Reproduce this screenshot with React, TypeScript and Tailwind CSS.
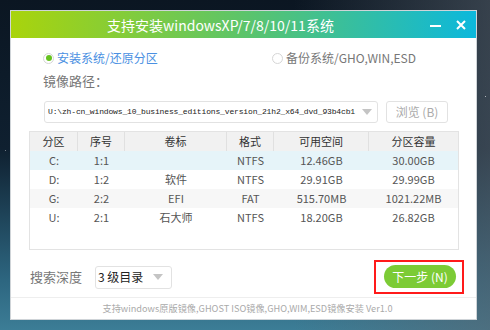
const rows = [
  { part: "C:", seq: "1:1", label: "", fmt: "NTFS", free: "12.46GB", size: "30.00GB", bg: "bg-[#e6f4f9]" },
  { part: "D:", seq: "1:2", label: "软件", fmt: "NTFS", free: "29.91GB", size: "29.99GB", bg: "bg-white" },
  { part: "G:", seq: "2:2", label: "EFI", fmt: "FAT", free: "515.70MB", size: "1021.22MB", bg: "bg-[#f7f7f7]" },
  { part: "U:", seq: "2:1", label: "石大师", fmt: "NTFS", free: "18.20GB", size: "26.82GB", bg: "bg-white" },
];

const cols = "grid grid-cols-[48px_47px_102px_47px_95px_89px]";

function Radio({ checked, label, active }: { checked?: boolean; label: string; active?: boolean }) {
  return (
    <div className="flex items-center gap-[3px]">
      <span className="flex h-[11px] w-[11px] items-center justify-center rounded-full border border-[#d6d6d6] bg-white">
        {checked && <span className="h-[6px] w-[6px] rounded-full bg-[#66c21f]" />}
      </span>
      <span className={active ? "text-[12px] text-[#4a90e2]" : "text-[12px] text-[#777]"}>{label}</span>
    </div>
  );
}

export default function App() {
  return (
    <div
      className="relative h-[330px] w-[490px] overflow-hidden bg-[linear-gradient(180deg,#0b1622_0%,#0f2030_45%,#2d6680_85%,#3c7d96_100%)] pt-[10px] pl-[10px]"
      style={{ fontFamily: '"Noto Sans CJK SC", "Noto Sans", sans-serif' }}
    >
      <div className="pointer-events-none absolute inset-0 bg-[linear-gradient(90deg,transparent_60%,rgba(90,100,110,0.55)_100%)]" />
      <span className="absolute left-[485px] top-[96px] h-[1px] w-[1px] bg-white/60" />
      <span className="absolute left-[5px] top-[150px] h-[1px] w-[1px] bg-white/40" />

      <div className="relative flex h-[310px] w-[467px] flex-col border border-[#cfd4d8] bg-white">
        {/* title bar */}
        <div className="flex h-[27px] items-center bg-[linear-gradient(90deg,#a9d40c_0%,#5cc46a_50%,#0cb8dc_100%)] text-white">
          <div className="flex-1 text-center text-[14px] leading-none">支持安装windowsXP/7/8/10/11系统</div>
          <div className="flex items-center gap-[15px] pr-[10px]">
            <span className="mt-[2px] h-[2px] w-[11px] bg-white" />
            <svg width="10" height="10" viewBox="0 0 10 10">
              <path d="M1 1 L9 9 M9 1 L1 9" stroke="white" strokeWidth="2" />
            </svg>
          </div>
        </div>

        <div className="flex flex-1 flex-col">
          <div className="mt-[12px] flex h-[16px] items-center pl-[32px]">
            <div className="w-[229px]">
              <Radio checked active label="安装系统/还原分区" />
            </div>
            <Radio label="备份系统/GHO,WIN,ESD" />
          </div>

          <div className="mt-[7px] pl-[32px] text-[13px] leading-[16px] text-[#777]">镜像路径：</div>

          <div className="mt-[12px] flex h-[22px] items-center pl-[33px]">
            <div className="flex h-[22px] w-[334px] items-center rounded-[3px] border border-[#e2e2e2] pl-[3px] pr-[5px]">
              <span
                className="flex-1 overflow-hidden whitespace-nowrap text-[8px] tracking-[-0.15px] text-[#222]"
                style={{ fontFamily: '"Liberation Mono", monospace' }}
              >
                U:\zh-cn_windows_10_business_editions_version_21h2_x64_dvd_93b4cb1
              </span>
              <svg width="10" height="6" viewBox="0 0 10 6" className="ml-[4px]">
                <path d="M0 0 L10 0 L5 6 Z" fill="#c4c4c4" />
              </svg>
            </div>
            <div className="ml-[8px] flex h-[22px] w-[62px] items-center justify-center rounded-[3px] border border-[#e2e2e2] text-[12px] text-[#aaa]">
              浏览 (B)
            </div>
          </div>

          <div className="ml-[18px] mt-[8px] h-[119px] w-[430px] border border-[#e3e3e3] text-[11px] text-[#555]">
            <div className={`${cols} h-[19px] bg-[#f1f1f1] text-[#333]`}>
              {["分区", "序号", "卷标", "格式", "可用空间", "分区容量"].map((h, i) => (
                <div
                  key={h}
                  className={
                    i < 5
                      ? "flex items-center justify-center border-r border-[#e0e0e0]"
                      : "flex items-center justify-center"
                  }
                >
                  {h}
                </div>
              ))}
            </div>
            {rows.map((r) => (
              <div key={r.part} className={`${cols} h-[19px] ${r.bg}`}>
                {[r.part, r.seq, r.label, r.fmt, r.free, r.size].map((v, i) => (
                  <div key={i} className="flex items-center justify-center">
                    {v}
                  </div>
                ))}
              </div>
            ))}
          </div>

          <div className="mt-[10px] flex items-center pl-[19px] pr-[12px]">
            <span className="text-[13px] text-[#777]">搜索深度</span>
            <div className="ml-[13px] flex h-[23px] w-[77px] items-center rounded-[3px] border border-[#e2e2e2] pl-[2px] pr-[8px]">
              <span className="flex-1 text-[12px] text-[#222]">3 级目录</span>
              <svg width="10" height="6" viewBox="0 0 10 6">
                <path d="M0 0 L10 0 L5 6 Z" fill="#c4c4c4" />
              </svg>
            </div>
            <div className="flex-1" />
            <div className="flex h-[34px] w-[90px] items-start border-2 border-[#ff1a1a] pl-[8px] pt-[3px]">
              <div className="flex h-[23px] w-[72px] items-center justify-center rounded-full bg-[#7ccb35] text-[12px] text-white">
                下一步 (N)
              </div>
            </div>
          </div>

          <div className="flex-1" />
        </div>

        <div className="flex h-[22px] items-center justify-center border-t border-[#eeeeee] pl-[8px] text-[9.2px] text-[#aaa]">
          支持windows原版镜像,GHOST ISO镜像,GHO,WIM,ESD镜像安装 Ver1.0
        </div>
      </div>
    </div>
  );
}
